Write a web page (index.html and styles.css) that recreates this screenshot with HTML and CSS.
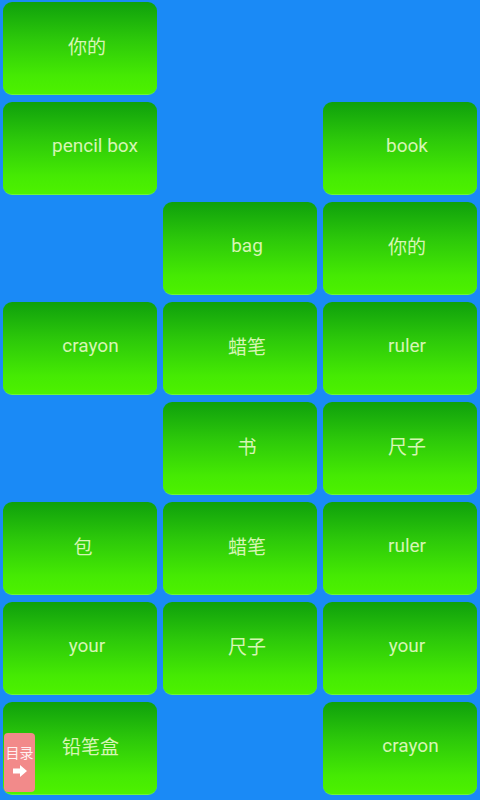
FILE: index.html
```html
<!DOCTYPE html>
<html>
<head>
<meta charset="utf-8">
<link rel="stylesheet" href="styles.css">
</head>
<body>
<div class="board">
  <div class="cell"><div class="btn">你的</div></div>
  <div class="cell"></div>
  <div class="cell"></div>

  <div class="cell"><div class="btn wide">pencil box</div></div>
  <div class="cell"></div>
  <div class="cell"><div class="btn">book</div></div>

  <div class="cell"></div>
  <div class="cell"><div class="btn">bag</div></div>
  <div class="cell"><div class="btn">你的</div></div>

  <div class="cell"><div class="btn shifted">crayon</div></div>
  <div class="cell"><div class="btn">蜡笔</div></div>
  <div class="cell"><div class="btn">ruler</div></div>

  <div class="cell"></div>
  <div class="cell"><div class="btn">书</div></div>
  <div class="cell"><div class="btn">尺子</div></div>

  <div class="cell"><div class="btn narrow">包</div></div>
  <div class="cell"><div class="btn">蜡笔</div></div>
  <div class="cell"><div class="btn">ruler</div></div>

  <div class="cell"><div class="btn">your</div></div>
  <div class="cell"><div class="btn">尺子</div></div>
  <div class="cell"><div class="btn">your</div></div>

  <div class="cell"><div class="btn shifted">铅笔盒</div></div>
  <div class="cell"></div>
  <div class="cell"><div class="btn shifted">crayon</div></div>
</div>
<div class="menu">
  <span class="menu-text">目录</span>
  <svg class="menu-arrow" width="16" height="14" viewBox="0 0 16 14">
    <path d="M1 4.5 H8 V1 L15 7 L8 13 V9.5 H1 Z" fill="#ffffff"/>
  </svg>
</div>
</body>
</html>
```
FILE: styles.css
```css
html, body {
  margin: 0;
  padding: 0;
}
body {
  width: 480px;
  height: 800px;
  background: #1a8af6;
  overflow: hidden;
  font-family: Roboto, "Noto Sans CJK SC", sans-serif;
}
.board {
  display: grid;
  grid-template-columns: repeat(3, 160px);
  grid-template-rows: repeat(8, 100px);
}
.cell {
  display: flex;
  padding: 2px 3px 5px 3px;
}
.btn {
  flex: 1;
  display: flex;
  align-items: center;
  justify-content: center;
  box-sizing: border-box;
  padding: 0 0 5px 14px;
  border-radius: 9px;
  border-bottom: 1px solid #6cf53a;
  background: linear-gradient(to bottom, #0fa00c 0%, #2cc80a 40%, #45ea03 80%, #4df200 100%);
  color: #d6f6b4;
  font-size: 19px;
}
.btn.wide {
  padding-left: 30px;
}
.btn.shifted {
  padding-left: 21px;
}
.btn.narrow {
  padding-left: 6px;
}
.menu {
  position: absolute;
  left: 4px;
  top: 733px;
  width: 31px;
  height: 59px;
  border-radius: 4px;
  background: #f28a8a;
  display: flex;
  flex-direction: column;
  align-items: center;
  padding-top: 11px;
  box-sizing: border-box;
  gap: 4px;
}
.menu-text {
  color: #fff0f0;
  font-size: 14px;
  line-height: 16px;
  font-family: "Noto Sans CJK SC", sans-serif;
  white-space: nowrap;
}
.menu-arrow {
  display: block;
}
```
